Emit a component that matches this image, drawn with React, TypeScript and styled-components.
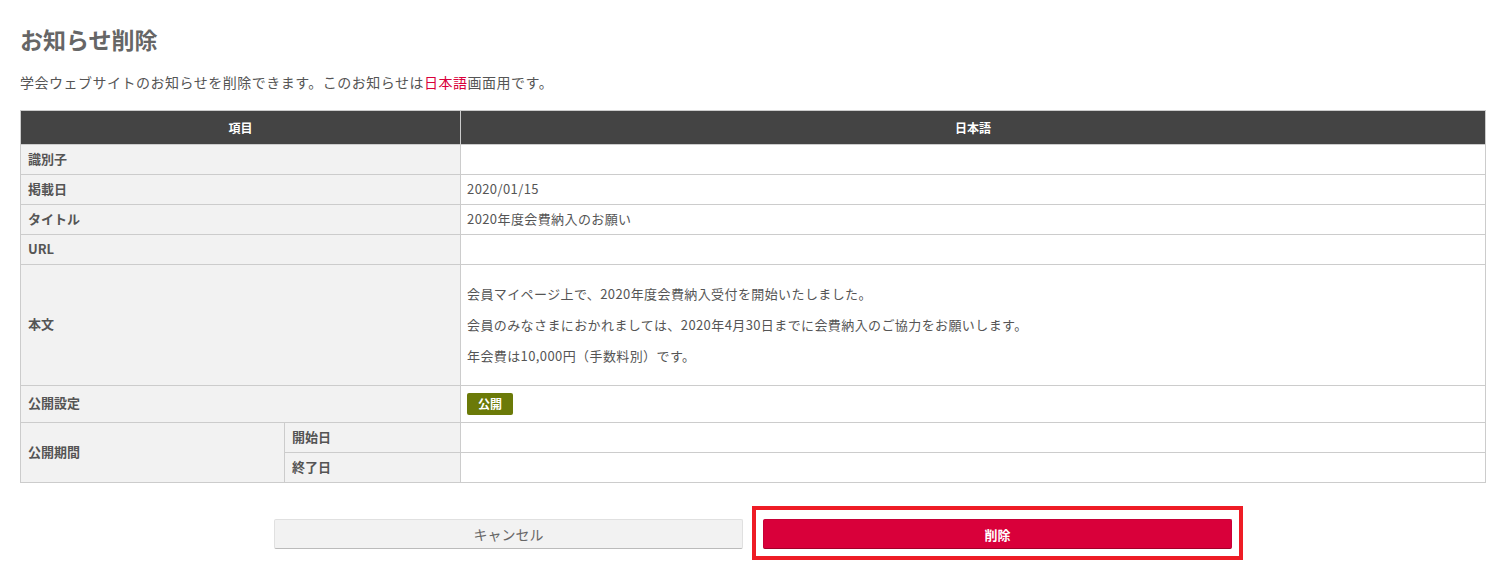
import React from "react";
import styled, { createGlobalStyle } from "styled-components";

const GlobalStyle = createGlobalStyle`
  html, body { margin: 0; padding: 0; background: #fff; }
  body {
    font-family: "Noto Sans CJK JP", "Noto Sans", "Liberation Sans", sans-serif;
    color: #555;
  }
`;

const Page = styled.div`
  padding: 24px 19px 20px 20px;
`;

const Title = styled.h1`
  margin: 0;
  font-size: 23px;
  line-height: 30px;
  font-weight: bold;
  color: #666;
`;

const Lead = styled.p`
  margin: 19px 0 0;
  font-size: 14px;
  letter-spacing: 0.5px;
  line-height: 18px;
  color: #555;
`;

const Accent = styled.span`
  color: #d9003a;
`;

const Table = styled.table`
  margin-top: 19px;
  width: 100%;
  border-collapse: collapse;
  table-layout: fixed;
  font-size: 12px;
`;

const Th = styled.th`
  background: #444;
  color: #fff;
  font-weight: bold;
  font-size: 12px;
  height: 33px;
  padding: 0;
  border: 1px solid #ccc;
  text-align: center;
`;

const Label = styled.th`
  background: #f2f2f2;
  color: #555;
  font-weight: bold;
  font-size: 13px;
  text-align: left;
  padding: 0 7px 3px;
  height: 26px;
  border: 1px solid #ccc;
`;

const Value = styled.td<{ $tall?: boolean }>`
  background: #fff;
  color: #555;
  font-size: 13px;
  letter-spacing: 0.4px;
  padding: ${(p) => (p.$tall ? "7px 6px" : "0 6px 3px")};
  height: ${(p) => (p.$tall ? "auto" : "26px")};
  border: 1px solid #ccc;
  vertical-align: middle;
`;

const Para = styled.p`
  margin: 13px 0;
  line-height: 18px;
`;

const Badge = styled.span`
  display: inline-block;
  background: #6b7a08;
  color: #fff;
  font-weight: bold;
  font-size: 12px;
  letter-spacing: 0;
  line-height: 22px;
  padding: 0 11px;
  border-radius: 2px;
  margin: 7px 0 4px;
`;

const Actions = styled.div`
  display: flex;
  justify-content: center;
  gap: 20px;
  margin-top: 36px;
`;

const Button = styled.button<{ $danger?: boolean }>`
  width: 469px;
  height: 30px;
  border: 1px solid ${(p) => (p.$danger ? "#c80036" : "#e0e0e0")};
  border-bottom-color: ${(p) => (p.$danger ? "#a0002a" : "#bbb")};
  border-radius: 2px;
  background: ${(p) => (p.$danger ? "#d9003a" : "#f2f2f2")};
  color: ${(p) => (p.$danger ? "#fff" : "#666")};
  font-family: inherit;
  font-size: ${(p) => (p.$danger ? "13px" : "14px")};
  font-weight: ${(p) => (p.$danger ? "bold" : "normal")};
  cursor: pointer;
  padding: 0;
`;

const Highlight = styled.div`
  position: relative;
  &::after {
    content: "";
    position: absolute;
    top: -13px;
    left: -11px;
    right: -11px;
    bottom: -11px;
    border: 4px solid #ee1c25;
    pointer-events: none;
  }
`;

export default function App() {
  return (
    <>
      <GlobalStyle />
      <Page>
        <Title>お知らせ削除</Title>
        <Lead>
          学会ウェブサイトのお知らせを削除できます。このお知らせは<Accent>日本語</Accent>画面用です。
        </Lead>
        <Table>
          <colgroup>
            <col style={{ width: 264 }} />
            <col style={{ width: 176 }} />
            <col />
          </colgroup>
          <thead>
            <tr>
              <Th colSpan={2}>項目</Th>
              <Th>日本語</Th>
            </tr>
          </thead>
          <tbody>
            <tr>
              <Label colSpan={2}>識別子</Label>
              <Value></Value>
            </tr>
            <tr>
              <Label colSpan={2}>掲載日</Label>
              <Value>2020/01/15</Value>
            </tr>
            <tr>
              <Label colSpan={2}>タイトル</Label>
              <Value>2020年度会費納入のお願い</Value>
            </tr>
            <tr>
              <Label colSpan={2}>URL</Label>
              <Value></Value>
            </tr>
            <tr>
              <Label colSpan={2}>本文</Label>
              <Value $tall>
                <Para>会員マイページ上で、2020年度会費納入受付を開始いたしました。</Para>
                <Para>会員のみなさまにおかれましては、2020年4月30日までに会費納入のご協力をお願いします。</Para>
                <Para>年会費は10,000円（手数料別）です。</Para>
              </Value>
            </tr>
            <tr>
              <Label colSpan={2}>公開設定</Label>
              <Value>
                <Badge>公開</Badge>
              </Value>
            </tr>
            <tr>
              <Label rowSpan={2}>公開期間</Label>
              <Label>開始日</Label>
              <Value></Value>
            </tr>
            <tr>
              <Label>終了日</Label>
              <Value></Value>
            </tr>
          </tbody>
        </Table>
        <Actions>
          <Button>キャンセル</Button>
          <Highlight>
            <Button $danger>削除</Button>
          </Highlight>
        </Actions>
      </Page>
    </>
  );
}
